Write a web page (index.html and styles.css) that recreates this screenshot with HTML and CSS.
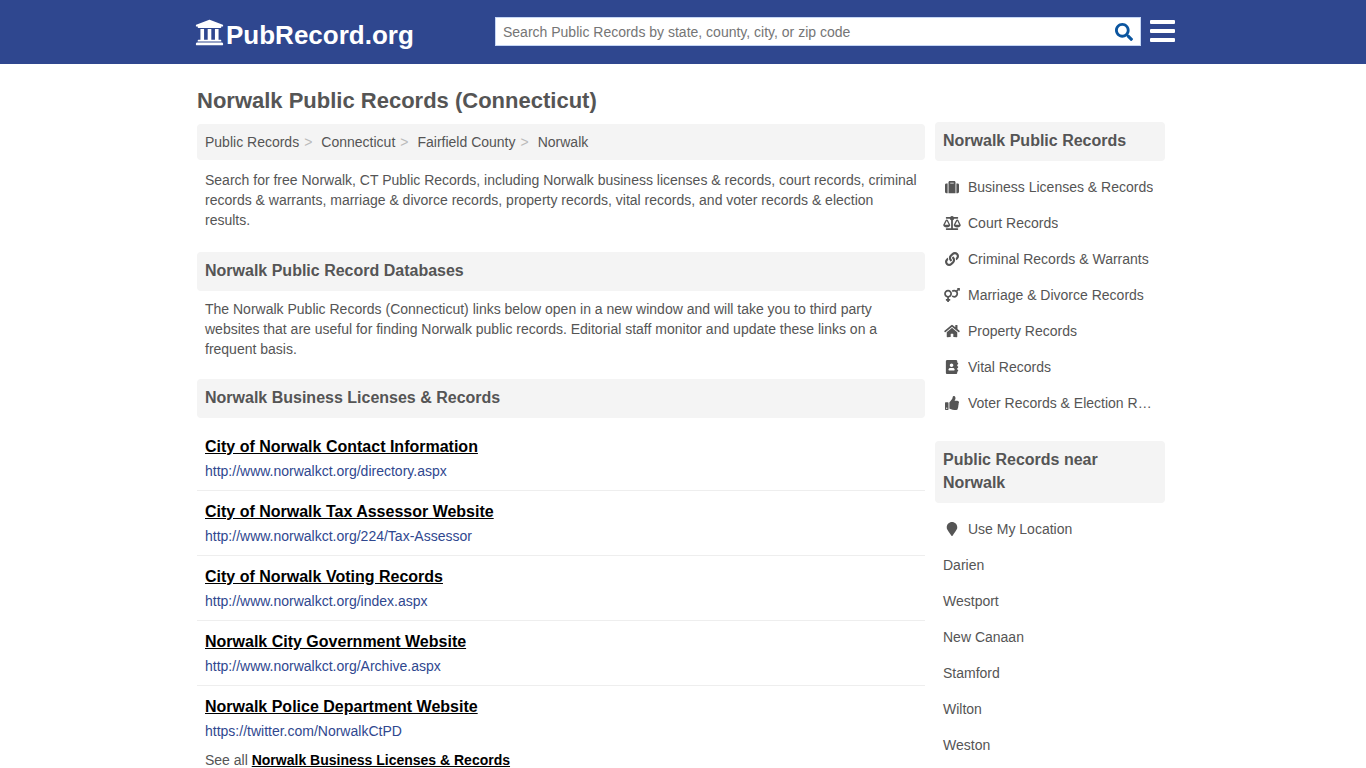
FILE: index.html
```html
<!DOCTYPE html>
<html lang="en">
<head>
<meta charset="utf-8">
<meta name="viewport" content="width=device-width, initial-scale=1">
<title>Norwalk Public Records (Connecticut)</title>
<link rel="stylesheet" href="styles.css">
</head>
<body>
<header class="site-header">
  <div class="header-inner">
    <a class="logo" href="#">
      <svg class="logo-icon" viewBox="0 0 512 512" aria-hidden="true"><path d="M496 128v16a8 8 0 0 1-8 8h-24v12c0 6.600-5.400 12-12 12H60c-6.600 0-12-5.400-12-12v-12H24a8 8 0 0 1-8-8v-16a8 8 0 0 1 4.900-7.400l232-88a8 8 0 0 1 6.200 0l232 88A8 8 0 0 1 496 128zm-24 304H40c-13.300 0-24 10.700-24 24v16a8 8 0 0 0 8 8h464a8 8 0 0 0 8-8v-16c0-13.300-10.700-24-24-24zM96 192v192H60c-6.600 0-12 5.400-12 12v20h416v-20c0-6.600-5.400-12-12-12h-36V192h-64v192h-64V192h-64v192h-64V192H96z"/></svg>
      <span>PubRecord.org</span>
    </a>
    <form class="search" role="search">
      <input class="search-input" type="text" aria-label="Search Public Records" placeholder="Search Public Records by state, county, city, or zip code">
      <button class="search-button" type="button" aria-label="Search">
        <svg class="search-icon" viewBox="0 0 512 512" aria-hidden="true"><path d="M505 442.700 405.300 343c-4.500-4.500-10.600-7-17-7H372c27.600-35.300 44-79.700 44-128C416 93.100 322.900 0 208 0S0 93.100 0 208s93.100 208 208 208c48.300 0 92.700-16.400 128-44v16.300c0 6.400 2.500 12.500 7 17l99.700 99.700c9.400 9.400 24.600 9.400 33.900 0l28.300-28.300c9.400-9.400 9.400-24.600.1-34zM208 336c-70.700 0-128-57.200-128-128 0-70.700 57.200-128 128-128 70.700 0 128 57.200 128 128 0 70.700-57.200 128-128 128z"/></svg>
      </button>
    </form>
    <button class="menu-button" type="button" aria-label="Menu"><span class="bar"></span><span class="bar"></span><span class="bar"></span></button>
  </div>
</header>
<div class="page">
  <main class="content">
    <h1 class="page-title">Norwalk Public Records (Connecticut)</h1>
    <nav aria-label="Breadcrumb">
      <ol class="breadcrumb">
        <li><a href="#">Public Records</a></li>
        <li><a href="#">Connecticut</a></li>
        <li><a href="#">Fairfield County</a></li>
        <li><a href="#">Norwalk</a></li>
      </ol>
    </nav>
    <p class="text intro">Search for free Norwalk, CT Public Records, including Norwalk business licenses &amp; records, court records, criminal records &amp; warrants, marriage &amp; divorce records, property records, vital records, and voter records &amp; election results.</p>
    <h2 class="section-title">Norwalk Public Record Databases</h2>
    <p class="text">The Norwalk Public Records (Connecticut) links below open in a new window and will take you to third party websites that are useful for finding Norwalk public records. Editorial staff monitor and update these links on a frequent basis.</p>
    <h2 class="section-title">Norwalk Business Licenses &amp; Records</h2>
    <ul class="results">
      <li class="result"><a class="result-title" href="#">City of Norwalk Contact Information</a><span class="result-url">http://www.norwalkct.org/directory.aspx</span></li>
      <li class="result"><a class="result-title" href="#">City of Norwalk Tax Assessor Website</a><span class="result-url">http://www.norwalkct.org/224/Tax-Assessor</span></li>
      <li class="result"><a class="result-title" href="#">City of Norwalk Voting Records</a><span class="result-url">http://www.norwalkct.org/index.aspx</span></li>
      <li class="result"><a class="result-title" href="#">Norwalk City Government Website</a><span class="result-url">http://www.norwalkct.org/Archive.aspx</span></li>
      <li class="result"><a class="result-title" href="#">Norwalk Police Department Website</a><span class="result-url">https://twitter.com/NorwalkCtPD</span></li>
    </ul>
    <p class="see-all">See all <a href="#">Norwalk Business Licenses &amp; Records</a></p>
  </main>
  <aside class="sidebar">
    <h2 class="section-title">Norwalk Public Records</h2>
    <ul class="side-list">
      <li><a class="side-link" href="#"><svg class="side-icon" viewBox="0 0 512 512" aria-hidden="true"><path d="M128 480h256V80c0-26.500-21.500-48-48-48H176c-26.500 0-48 21.500-48 48v400zm64-384h128v32H192V96zm320 80v256c0 26.500-21.500 48-48 48h-48V128h48c26.500 0 48 21.500 48 48zM96 480H48c-26.500 0-48-21.500-48-48V176c0-26.500 21.500-48 48-48h48v352z"/></svg><span class="side-label">Business Licenses &amp; Records</span></a></li>
      <li><a class="side-link" href="#"><svg class="side-icon" viewBox="0 0 640 512" aria-hidden="true"><path d="M256 336h-.020c0-16.180 1.340-8.730-85.050-181.510-17.650-35.290-68.190-35.360-85.870 0C-2.060 328.750.020 320.330.020 336H0c0 44.180 57.310 80 128 80s128-35.820 128-80zM128 176l72 144H56l72-144zm511.980 160c0-16.180 1.340-8.730-85.050-181.510-17.650-35.290-68.190-35.360-85.870 0-87.120 174.260-85.040 165.840-85.040 181.510H384c0 44.180 57.310 80 128 80s128-35.820 128-80h-.020zM440 320l72-144 72 144H440zm88 128H352V153.250c23.510-10.290 41.160-31.480 46.390-57.250H528c8.840 0 16-7.160 16-16V48c0-8.840-7.160-16-16-16H383.640C369.040 12.680 346.090 0 320 0s-49.040 12.680-63.640 32H112c-8.840 0-16 7.160-16 16v32c0 8.840 7.160 16 16 16h129.610c5.230 25.760 22.870 46.960 46.390 57.250V448H112c-8.840 0-16 7.160-16 16v32c0 8.840 7.160 16 16 16h416c8.840 0 16-7.160 16-16v-32c0-8.840-7.160-16-16-16z"/></svg><span class="side-label">Court Records</span></a></li>
      <li><a class="side-link" href="#"><svg class="side-icon" viewBox="0 0 512 512" aria-hidden="true"><path d="M326.612 185.391c59.747 59.809 58.927 155.698.360 214.590-.110.120-.240.250-.360.370l-67.200 67.200c-59.270 59.270-155.699 59.262-214.960 0-59.270-59.260-59.270-155.700 0-214.960l37.106-37.106c9.840-9.840 26.786-3.300 27.294 10.606.648 17.722 3.826 35.527 9.690 52.721 1.986 5.822.567 12.262-3.783 16.612l-13.087 13.087c-28.026 28.026-28.905 73.660-1.155 101.960 28.024 28.579 74.086 28.749 102.325.510l67.200-67.190c28.191-28.191 28.073-73.757 0-101.830-3.701-3.694-7.429-6.564-10.341-8.569a16.037 16.037 0 0 1-6.947-12.606c-.396-10.567 3.348-21.456 11.698-29.806l21.054-21.055c5.521-5.521 14.182-6.199 20.584-1.731a152.482 152.482 0 0 1 20.522 17.197zM467.547 44.449c-59.261-59.262-155.690-59.270-214.960 0l-67.200 67.200c-.120.120-.250.250-.360.370-58.566 58.892-59.387 154.781.360 214.590a152.454 152.454 0 0 0 20.521 17.196c6.402 4.468 15.064 3.789 20.584-1.731l21.054-21.055c8.350-8.350 12.094-19.239 11.698-29.806a16.037 16.037 0 0 0-6.947-12.606c-2.912-2.005-6.640-4.875-10.341-8.569-28.073-28.073-28.191-73.639 0-101.830l67.200-67.190c28.239-28.239 74.300-28.069 102.325.510 27.750 28.300 26.872 73.934-1.155 101.960l-13.087 13.087c-4.350 4.350-5.769 10.790-3.783 16.612 5.864 17.194 9.042 34.999 9.690 52.721.509 13.906 17.454 20.446 27.294 10.606l37.106-37.106c59.271-59.259 59.271-155.699.001-214.959z"/></svg><span class="side-label">Criminal Records &amp; Warrants</span></a></li>
      <li><a class="side-link" href="#"><svg class="side-icon" viewBox="0 0 576 512" aria-hidden="true"><path d="M564 0h-79c-10.700 0-16 12.900-8.500 20.500l16.900 16.900-48.700 48.700C422.500 72.100 396.200 64 368 64c-33.700 0-64.600 11.600-89.200 30.900 14 16.700 25 36 32.100 57.100 14.500-14.800 34.700-24 57.100-24 44.100 0 80 35.900 80 80s-35.900 80-80 80c-22.300 0-42.600-9.200-57.100-24-7.100 21.100-18 40.400-32.100 57.100 24.500 19.400 55.500 30.900 89.200 30.900 79.500 0 144-64.500 144-144 0-28.200-8.100-54.500-22.100-76.700l48.700-48.700 16.900 16.900c2.400 2.400 5.400 3.500 8.400 3.500 6.200 0 12.100-4.800 12.100-12V12c0-6.600-5.400-12-12-12zM144 64C64.500 64 0 128.500 0 208c0 68.500 47.900 125.900 112 140.400V400H76c-6.600 0-12 5.400-12 12v40c0 6.600 5.400 12 12 12h36v36c0 6.600 5.400 12 12 12h40c6.600 0 12-5.400 12-12v-36h36c6.600 0 12-5.400 12-12v-40c0-6.600-5.400-12-12-12h-36v-51.600c64.100-14.600 112-71.900 112-140.400 0-79.500-64.500-144-144-144zm0 224c-44.100 0-80-35.900-80-80s35.900-80 80-80 80 35.900 80 80-35.900 80-80 80z"/></svg><span class="side-label">Marriage &amp; Divorce Records</span></a></li>
      <li><a class="side-link" href="#"><svg class="side-icon" viewBox="0 0 576 512" aria-hidden="true"><path d="M280.370 148.260 96 300.110V464a16 16 0 0 0 16 16l112.060-.290a16 16 0 0 0 15.920-16V368a16 16 0 0 1 16-16h64a16 16 0 0 1 16 16v95.640a16 16 0 0 0 16 16.050L464 480a16 16 0 0 0 16-16V300L295.670 148.260a12.190 12.190 0 0 0-15.300 0zM571.600 251.470 488 182.560V44.050a12 12 0 0 0-12-12h-56a12 12 0 0 0-12 12v72.610L318.470 43a48 48 0 0 0-61 0L4.340 251.470a12 12 0 0 0-1.600 16.900l25.500 31A12 12 0 0 0 45.150 301l235.220-193.740a12.190 12.190 0 0 1 15.300 0L530.900 301a12 12 0 0 0 16.900-1.600l25.500-31a12 12 0 0 0-1.700-16.930z"/></svg><span class="side-label">Property Records</span></a></li>
      <li><a class="side-link" href="#"><svg class="side-icon" viewBox="0 0 448 512" aria-hidden="true"><path d="M436 160c6.600 0 12-5.400 12-12v-40c0-6.600-5.400-12-12-12h-20V48c0-26.500-21.500-48-48-48H48C21.500 0 0 21.500 0 48v416c0 26.500 21.500 48 48 48h320c26.500 0 48-21.500 48-48v-48h20c6.600 0 12-5.400 12-12v-40c0-6.600-5.400-12-12-12h-20v-64h20c6.600 0 12-5.400 12-12v-40c0-6.600-5.400-12-12-12h-20v-64h20zm-228-32c35.300 0 64 28.700 64 64s-28.700 64-64 64-64-28.700-64-64 28.700-64 64-64zm112 236.800c0 10.600-10 19.200-22.400 19.200H118.400C106 384 96 375.400 96 364.800v-19.200c0-31.800 30.100-57.600 67.200-57.600h5c12.300 5.100 25.700 8 39.800 8s27.600-2.900 39.800-8h5c37.100 0 67.200 25.800 67.200 57.600v19.200z"/></svg><span class="side-label">Vital Records</span></a></li>
      <li><a class="side-link" href="#"><svg class="side-icon" viewBox="0 0 512 512" aria-hidden="true"><path d="M104 224H24c-13.255 0-24 10.745-24 24v240c0 13.255 10.745 24 24 24h80c13.255 0 24-10.745 24-24V248c0-13.255-10.745-24-24-24zM64 472c-13.255 0-24-10.745-24-24s10.745-24 24-24 24 10.745 24 24-10.745 24-24 24zM384 81.452c0 42.416-25.970 66.208-33.277 94.548h101.723c33.397 0 59.397 27.746 59.553 58.098.084 17.938-7.546 37.249-19.439 49.197l-.110.110c9.836 23.337 8.237 56.037-9.308 79.469 8.681 25.895-.069 57.704-16.382 74.757 4.298 17.598 2.244 32.575-6.148 44.632C440.202 511.587 389.616 512 346.839 512l-2.845-.001c-48.287-.017-87.806-17.598-119.560-31.725-15.957-7.099-36.821-15.887-52.651-16.178-6.540-.120-11.783-5.457-11.783-11.998v-213.770c0-3.200 1.282-6.271 3.558-8.521 39.614-39.144 56.648-80.587 89.117-113.111 14.804-14.832 20.188-37.236 25.393-58.902C282.515 39.293 291.817 0 312 0c24 0 72 8 72 81.452z"/></svg><span class="side-label">Voter Records &amp; Election Results</span></a></li>
    </ul>
    <h2 class="section-title">Public Records near Norwalk</h2>
    <ul class="side-list">
      <li><a class="side-link" href="#"><svg class="side-icon" viewBox="0 0 384 512" aria-hidden="true"><path d="M172.268 501.670C26.970 291.031 0 269.413 0 192 0 85.961 85.961 0 192 0s192 85.961 192 192c0 77.413-26.970 99.031-172.268 309.670-9.535 13.774-29.930 13.773-39.464 0z"/></svg><span class="side-label">Use My Location</span></a></li>
      <li><a class="side-link" href="#">Darien</a></li>
      <li><a class="side-link" href="#">Westport</a></li>
      <li><a class="side-link" href="#">New Canaan</a></li>
      <li><a class="side-link" href="#">Stamford</a></li>
      <li><a class="side-link" href="#">Wilton</a></li>
      <li><a class="side-link" href="#">Weston</a></li>
    </ul>
  </aside>
</div>
</body>
</html>
```

FILE: styles.css
```css
* { box-sizing: border-box; }

body {
  margin: 0;
  background: #fff;
  color: #555;
  font: 14px/20px "Liberation Sans", Arial, sans-serif;
}

h1, h2, p, ul, ol { margin: 0; padding: 0; }
ul, ol { list-style: none; }
a { color: inherit; text-decoration: none; }
svg { fill: currentColor; }
button { border: 0; padding: 0; background: none; cursor: pointer; }

/* Header */
.site-header { background: #2f478f; color: #fff; }

.header-inner {
  display: grid;
  grid-template-columns: 300px 1fr 25px;
  align-items: start;
  max-width: 984px;
  margin: 0 auto;
  padding: 17px 0 12px 4px;
}

.logo {
  display: flex;
  align-items: flex-start;
  gap: 2px;
  padding-top: 1px;
  font-size: 26px;
  font-weight: bold;
  line-height: 34px;
}

.logo-icon { width: 29px; height: 29px; }

.search {
  display: flex;
  height: 29px;
  margin-right: 9px;
  border: 1px solid #c5d6f5;
  background: #fff;
}

.search-input {
  flex: 1;
  min-width: 0;
  padding: 0 7px;
  border: 0;
  outline: 0;
  background: transparent;
  color: #555;
  font: inherit;
}

.search-input::placeholder { color: #757575; opacity: 1; }

.search-button {
  display: flex;
  align-items: center;
  justify-content: center;
  width: 32px;
  color: #0b559f;
}

.search-icon { width: 18px; height: 18px; }

.menu-button {
  display: grid;
  gap: 5px;
  padding-top: 3px;
}

.bar { width: 25px; height: 4px; border-radius: 1px; background: #fff; }

/* Page */
.page {
  display: grid;
  grid-template-columns: minmax(0, 1fr) 230px;
  gap: 10px;
  max-width: 980px;
  margin: 0 auto;
  padding: 0 8px 0 4px;
}

.page-title {
  padding: 23px 0 9px;
  font-size: 22px;
  line-height: 28px;
}

.breadcrumb {
  display: flex;
  flex-wrap: wrap;
  padding: 8px;
  border-radius: 4px;
  background: #f4f4f4;
}

.breadcrumb li + li::before {
  content: ">";
  margin: 0 9px 0 5px;
  color: #bbb;
}

.text { padding: 8px 8px 20px; }
.intro { padding: 10px 8px 22px; }

.section-title {
  padding: 7px 8px 9px;
  border-radius: 4px;
  background: #f4f4f4;
  font-size: 16px;
  line-height: 23px;
}

.results { padding-top: 8px; }

.result {
  display: flex;
  flex-direction: column;
  align-items: flex-start;
  padding: 9px 8px 6px;
}

.result + .result { border-top: 1px solid #eee; }

.result-title {
  color: #000;
  font-size: 16px;
  font-weight: bold;
  line-height: 24px;
  text-decoration: underline;
}

.result-url { color: #2f478f; line-height: 25px; }

.see-all { padding: 0 8px; }
.see-all a { color: #000; font-weight: bold; text-decoration: underline; }

/* Sidebar */
.sidebar { padding-top: 58px; }

.side-list { padding: 8px 8px 20px; }

.side-link {
  display: flex;
  align-items: center;
  gap: 7px;
  padding: 8px 0;
}

.side-icon { flex: none; width: 18px; height: 14px; }

.side-label {
  overflow: hidden;
  text-overflow: ellipsis;
  white-space: nowrap;
}
```
